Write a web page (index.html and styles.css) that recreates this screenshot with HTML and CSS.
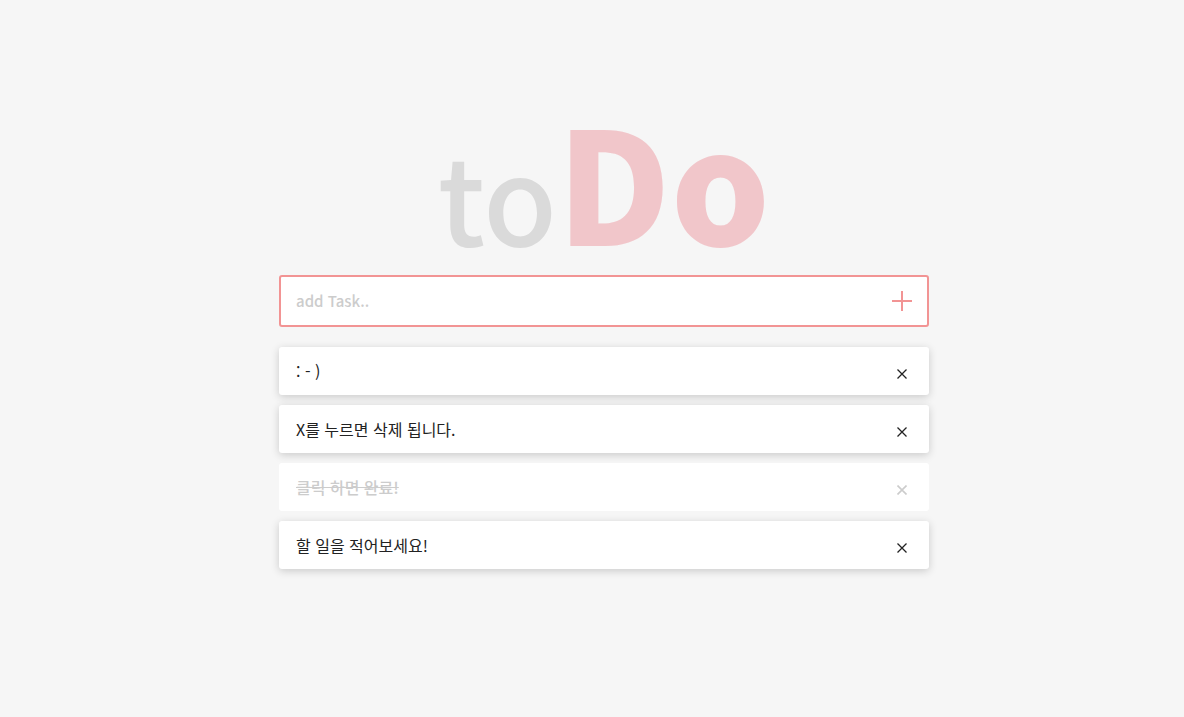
FILE: index.html
```html
<!DOCTYPE html>
<html lang="ko">
<head>
<meta charset="utf-8">
<title>toDo</title>
<link rel="stylesheet" href="styles.css">
</head>
<body>
<main class="todo">
  <h1 class="title">to<strong class="title-strong">Do</strong></h1>
  <form class="add">
    <input class="add-input" type="text" placeholder="add Task.." aria-label="add Task">
    <button class="add-button" type="button" aria-label="Add"><svg width="20" height="20" viewBox="0 0 20 20"><path d="M10 0V20M0 10H20"/></svg></button>
  </form>
  <ul class="list">
    <li class="item"><span>: - )</span><button class="remove" type="button" aria-label="Delete"><svg width="10" height="10" viewBox="0 0 10 10"><path d="M.5.5l9 9M9.5.5l-9 9"/></svg></button></li>
    <li class="item"><span>X를 누르면 삭제 됩니다.</span><button class="remove" type="button" aria-label="Delete"><svg width="10" height="10" viewBox="0 0 10 10"><path d="M.5.5l9 9M9.5.5l-9 9"/></svg></button></li>
    <li class="item item-done"><span>클릭 하면 완료!</span><button class="remove" type="button" aria-label="Delete"><svg width="10" height="10" viewBox="0 0 10 10"><path d="M.5.5l9 9M9.5.5l-9 9"/></svg></button></li>
    <li class="item"><span>할 일을 적어보세요!</span><button class="remove" type="button" aria-label="Delete"><svg width="10" height="10" viewBox="0 0 10 10"><path d="M.5.5l9 9M9.5.5l-9 9"/></svg></button></li>
  </ul>
</main>
</body>
</html>
```
FILE: styles.css
```css
* { box-sizing: border-box; }
body {
  min-height: 100vh;
  margin: 0;
  padding: 98px 0 40px 24px;
  background: #f6f6f6;
  color: #222;
  font: 16px/24px "Noto Sans CJK KR", sans-serif;
}
.todo {
  width: 100%;
  max-width: 650px;
  margin: 0 auto;
}
.title {
  margin: 0 0 17px;
  font-size: 120px;
  line-height: 120px;
  font-weight: 500;
  text-align: center;
  color: #dadada;
}
.title-strong {
  font-size: 156px;
  line-height: 160px;
  font-weight: 900;
  color: #f1c6ca;
}
.add {
  display: flex;
  align-items: center;
  height: 52px;
  padding: 0 15px;
  background: #fff;
  border: 2px solid #f29494;
  border-radius: 3px;
}
.add-input {
  flex: 1;
  min-width: 0;
  padding: 0;
  border: 0;
  outline: 0;
  background: none;
  font: inherit;
  font-size: 15px;
  font-weight: 500;
}
.add-input::placeholder { color: #ccc; opacity: 1; }
button { display: flex; padding: 0; border: 0; background: none; cursor: pointer; }
svg { fill: none; stroke: currentColor; }
.add-button { color: #f29494; stroke-width: 2; }
.list { display: grid; gap: 10px; margin: 20px 0 0; padding: 0; list-style: none; }
.item {
  display: flex;
  align-items: center;
  justify-content: space-between;
  min-height: 48px;
  padding: 0 22px 0 17px;
  background: #fff;
  border-radius: 3px;
  box-shadow: 0 2px 8px rgba(0, 0, 0, .18);
}
.remove { padding-top: 6px; color: #222; stroke-width: 1.3; }
.item-done { color: #ccc; font-weight: 500; text-decoration: line-through; box-shadow: none; }
.item-done .remove { color: #ccc; stroke-width: 1.6; }
```
